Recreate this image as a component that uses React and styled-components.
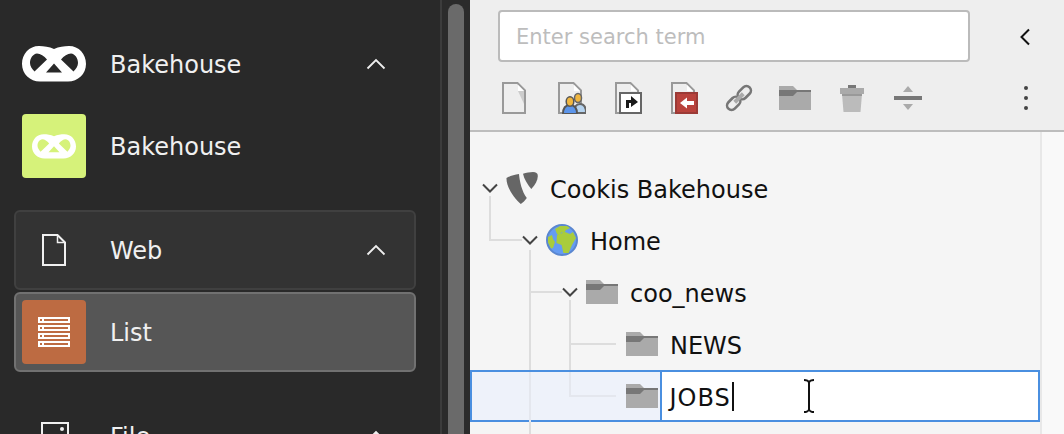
import React from "react"
import styled, { createGlobalStyle } from "styled-components"

const GlobalStyle = createGlobalStyle`
  html, body {
    margin: 0;
    padding: 0;
    height: 100%;
    overflow: hidden;
    font-family: "DejaVu Sans", Verdana, sans-serif;
  }
  #root { height: 100%; }
`

const Page = styled.div`
  display: flex;
  width: 1064px;
  height: 434px;
  overflow: hidden;
`

const Sidebar = styled.aside`
  width: 440px;
  flex: none;
  box-sizing: border-box;
  padding: 32px 24px 0 14px;
  background: #292929;
  overflow: hidden;
`

const SideScroll = styled.div`
  width: 30px;
  flex: none;
  box-sizing: border-box;
  padding: 4px 6px 0 6px;
  background: #2b2b2b;
  border-left: 2px solid #3c3c3c;
`

const SideThumb = styled.div`
  height: 500px;
  border-radius: 8px;
  background: #6a6a6a;
`

const ModuleRow = styled.div`
  display: flex;
  align-items: center;
  height: ${(p) => p.$height || 64}px;
  margin-bottom: ${(p) => p.$gap || 0}px;
  padding-left: 8px;
  padding-right: 30px;
  color: #f0f0f0;
  font-size: 24px;
`

const ModuleBox = styled(ModuleRow)`
  box-sizing: border-box;
  height: 80px;
  padding-left: 6px;
  padding-right: 28px;
  border: 2px solid ${(p) => (p.$active ? "#717171" : "#404040")};
  border-radius: 6px;
  background: ${(p) => (p.$active ? "#565656" : "#333333")};
`

const IconSlot = styled.div`
  width: 64px;
  height: 64px;
  flex: none;
  display: flex;
  align-items: center;
  justify-content: center;
  border-radius: 4px;
  background: ${(p) => p.$bg || "transparent"};
  margin-right: 24px;
`

const Label = styled.span`
  flex: 1;
  padding-top: 2px;
  line-height: 1;
`

const Panel = styled.main`
  flex: 1;
  display: flex;
  flex-direction: column;
  min-width: 0;
  background: #f5f5f5;
`

const Toolbar = styled.header`
  height: 132px;
  flex: none;
  box-sizing: border-box;
  padding: 10px 22px 0 28px;
  background: #eeeeee;
  border-bottom: 2px solid #bdbdbd;
`

const SearchRow = styled.div`
  display: flex;
  align-items: center;
  height: 52px;
  margin-bottom: 20px;
`

const SearchBox = styled.div`
  box-sizing: border-box;
  width: 472px;
  height: 52px;
  padding: 2px 0 0 16px;
  display: flex;
  align-items: center;
  background: #ffffff;
  border: 2px solid #bbbbbb;
  border-radius: 4px;
  color: #bdbdbd;
  font-size: 21px;
`

const CollapseIcon = styled.svg`
  margin: 2px 0 0 49px;
`

const ActionRow = styled.div`
  display: flex;
  align-items: center;
  height: 32px;
`

const ActionIcon = styled.svg`
  display: block;
  flex: none;
  margin-right: 24.3px;
`

const MoreIcon = styled.svg`
  display: block;
  margin-left: auto;
`

const Body = styled.div`
  flex: 1;
  display: flex;
  min-height: 0;
`

const Tree = styled.div`
  position: relative;
  width: 570px;
  flex: none;
  padding-top: 30px;
`

const TreeLines = styled.svg`
  position: absolute;
  left: 0;
  top: 0;
`

const TreeScroll = styled.div`
  flex: 1;
  background: #f9f9f9;
  border-left: 2px solid #e8e8e8;
`

const Node = styled.div`
  position: relative;
  display: flex;
  align-items: center;
  box-sizing: border-box;
  height: 52px;
  padding-left: ${(p) => 12 + p.$level * 40}px;
  font-size: 24px;
  color: #111111;
`

const EditNode = styled(Node)`
  padding-left: ${(p) => 10 + p.$level * 40}px;
  border: 2px solid #4a8fe0;
  background: #eef2fa;
`

const Toggle = styled.div`
  width: 16px;
  height: 16px;
  flex: none;
  margin-right: 8px;
  display: flex;
  align-items: center;
  justify-content: center;
`

const NodeIcon = styled.svg`
  display: block;
  flex: none;
  margin-right: 12px;
`

const EditIcon = styled(NodeIcon)`
  margin-right: 1.5px;
`

const NodeText = styled.span`
  padding-top: 4px;
`

const NodeInput = styled.div`
  position: relative;
  flex: 1;
  align-self: stretch;
  display: flex;
  align-items: center;
  padding-left: 8px;
  background: #ffffff;
  border-left: 2px solid #4a8fe0;
  font-size: 24px;
`

const InputText = styled.span`
  padding-top: 3px;
  letter-spacing: 1px;
`

const Caret = styled.span`
  display: inline-block;
  width: 2px;
  height: 29px;
  margin-left: 1px;
  background: #111111;
`

const IBeam = styled.svg`
  position: absolute;
  left: 141px;
  top: 7px;
`

const Pretzel = ({ width, height }) => (
  <svg width={width} height={height} viewBox="0 0 64 36">
    <path
      fill="#ffffff"
      fillRule="evenodd"
      d="M32 3C27 .8 22 0 17 0 7 0 0 8 0 18c0 10 8 17.500 18 17.500h28c10 0 18-7.500 18-17.500C64 8 57 0 47 0 42 0 37 .8 32 3ZM15 7.500C11 8 8 12 8 17c0 3 2 6 4.500 8.500L25 13.500C22 10 18.500 7.500 15 7.500ZM49 7.500C53 8 56 12 56 17c0 3-2 6-4.500 8.500L39 13.500C42 10 45.500 7.500 49 7.500ZM32 17.500 24 26.500H40Z"
    />
  </svg>
)

const Chevron = ({ up }) => (
  <svg width="20" height="12" viewBox="0 0 20 12">
    <path
      d={up ? "M1.500 10.500 10 2l8.500 8.500" : "M1.500 1.500 10 10l8.500-8.500"}
      fill="none"
      stroke="#eeeeee"
      strokeWidth="1.800"
    />
  </svg>
)

const TreeChevron = () => (
  <svg width="16" height="10" viewBox="0 0 16 10">
    <path d="M1 1.500 8 8.500l7-7" fill="none" stroke="#444444" strokeWidth="2" />
  </svg>
)

const PageGlyph = ({ stroke = "#999999" }) => (
  <path d="M5 1H19.500L27 8.500V31H5Z" fill="none" stroke={stroke} strokeWidth="2" />
)

const FolderGlyph = () => (
  <>
    <path d="M0 0H14L18 4H32V24H0Z" fill="#aaaaaa" />
    <path d="M0 4H32V6H18L14 10H0Z" fill="#777777" />
  </>
)

const Folder = ({ as: Wrap = NodeIcon }) => (
  <Wrap width="32" height="24" viewBox="0 0 32 24">
    <FolderGlyph />
  </Wrap>
)

const ListGlyph = () => (
  <svg width="32" height="30" viewBox="0 0 32 30">
    {[0, 8, 16, 24].map((y) => (
      <g key={y}>
        <rect x="0" y={y} width="32" height="6" fill="#ffffff" />
        <rect x="6" y={y + 2} width="24" height="2" fill="#bd6b42" />
        <rect x="2" y={y + 2} width="2" height="2" fill="#bd6b42" />
      </g>
    ))}
  </svg>
)

const Typo3 = () => (
  <NodeIcon width="32" height="33" viewBox="0 0 32 33">
    <path
      fill="#666666"
      d="M.5 6C4 4 8.500 2.500 13 2c.5 7 3 18 7.800 24-1.800 2.500-3.800 4.500-6 6C9 27.500 0 15 .5 6Z"
    />
    <path
      fill="#666666"
      d="M17 1.800C20 .8 24 0 27 0c3 0 4.800 1 4.800 4 0 4-2.500 9-6.500 13C21.500 12.500 18 7 17 1.800Z"
    />
  </NodeIcon>
)

const Globe = () => (
  <NodeIcon width="32" height="32" viewBox="0 0 32 32">
    <circle cx="16" cy="16" r="15" fill="#659cf2" stroke="#5a86cf" strokeWidth="2" />
    <path
      fill="#a9cc3c"
      d="M9 5l5-3 7 0 3 2-4 2-2 3-3-.5-1 2.500-3-1ZM11 11l8-3 5 2 3-2 3 6-4 7-3.400 8H17.400l-1.800-8-5.200-2ZM2 13l4-2 1 4 2 3-2 6-2 .5-3-6Z"
    />
  </NodeIcon>
)

const PlainPage = () => (
  <ActionIcon width="32" height="32" viewBox="0 0 32 32">
    <PageGlyph />
    <path d="M20 3V9H26Z" fill="#ffffff" />
    <path d="M20 9H26V22Z" fill="#cccccc" />
  </ActionIcon>
)

const UsersPage = () => (
  <ActionIcon width="32" height="32" viewBox="0 0 32 32">
    <PageGlyph />
    <path d="M20 3V9H26Z" fill="#ffffff" />
    <path d="M20 31c0-6 2-9 6-9s6 3 6 9Z" fill="#b5d3ef" stroke="#666666" strokeWidth="2" />
    <ellipse cx="24" cy="16" rx="3.500" ry="4.500" fill="#f0b63f" stroke="#666666" strokeWidth="1.500" />
    <path d="M9 32c0-6.500 2.500-9 7-9s7 2.500 7 9Z" fill="#5c95ea" stroke="#555555" strokeWidth="2" />
    <ellipse cx="16" cy="19.500" rx="3.800" ry="4.800" fill="#f0b63f" stroke="#555555" strokeWidth="1.500" />
  </ActionIcon>
)

const ShortcutPage = () => (
  <ActionIcon width="32" height="32" viewBox="0 0 32 32">
    <PageGlyph />
    <path d="M20 3V9H26Z" fill="#ffffff" />
    <rect x="9" y="11" width="21" height="20" fill="#ffffff" stroke="#666666" strokeWidth="2" />
    <path d="M15 26V18H20V14L27 20 20 25V21H18V26Z" fill="#1a1a1a" />
  </ActionIcon>
)

const UnlinkPage = () => (
  <ActionIcon width="32" height="32" viewBox="0 0 32 32">
    <PageGlyph />
    <path d="M20 3V9H26Z" fill="#ffffff" />
    <rect x="9" y="11" width="21" height="20" fill="#b9423c" stroke="#9b3a36" strokeWidth="2" />
    <path d="M13 21 20 15.500V19H27V23H20V26.500Z" fill="#ffffff" />
  </ActionIcon>
)

const LinkIcon = () => (
  <ActionIcon width="32" height="32" viewBox="0 0 32 32">
    <g transform="rotate(-45 16 16)" fill="none" strokeWidth="2.600">
      <rect x="1" y="11.500" width="15" height="9" rx="4.500" stroke="#777777" />
      <rect x="16" y="11.500" width="15" height="9" rx="4.500" stroke="#777777" />
      <path d="M10 16H22" stroke="#aaaaaa" strokeWidth="4" />
    </g>
  </ActionIcon>
)

const TrashIcon = () => (
  <ActionIcon width="32" height="32" viewBox="0 0 32 32">
    <rect x="12" y="3" width="8" height="3" fill="#777777" />
    <rect x="4" y="6" width="24" height="6" fill="#aaaaaa" />
    <path d="M6 12H26L24.500 30H7.500Z" fill="#bbbbbb" />
    <rect x="6" y="12" width="20" height="2" fill="#999999" />
  </ActionIcon>
)

const DividerIcon = () => (
  <ActionIcon width="32" height="32" viewBox="0 0 32 32">
    <path d="M16 4 21 10H11Z" fill="#aaaaaa" />
    <rect x="2" y="14" width="28" height="4" fill="#777777" />
    <path d="M16 28 21 22H11Z" fill="#aaaaaa" />
  </ActionIcon>
)

const App = () => (
  <Page>
    <GlobalStyle />
    <Sidebar>
      <ModuleRow $gap={18}>
        <IconSlot>
          <Pretzel width={64} height={36} />
        </IconSlot>
        <Label>Bakehouse</Label>
        <Chevron up />
      </ModuleRow>
      <ModuleRow $gap={32}>
        <IconSlot $bg="#d6f27a">
          <Pretzel width={44} height={25} />
        </IconSlot>
        <Label>Bakehouse</Label>
      </ModuleRow>
      <ModuleBox $gap={2}>
        <IconSlot>
          <svg width="32" height="32" viewBox="0 0 32 32">
            <PageGlyph stroke="#f0f0f0" />
            <path d="M19.500 2V8.500H26" fill="none" stroke="#f0f0f0" strokeWidth="1.500" />
          </svg>
        </IconSlot>
        <Label>Web</Label>
        <Chevron up />
      </ModuleBox>
      <ModuleBox $active $gap={24}>
        <IconSlot $bg="#bd6b42">
          <ListGlyph />
        </IconSlot>
        <Label>List</Label>
      </ModuleBox>
      <ModuleRow $height={80}>
        <IconSlot>
          <svg width="32" height="28" viewBox="0 0 32 28">
            <rect x="4" y="1" width="26" height="24" fill="none" stroke="#f0f0f0" strokeWidth="2" />
            <circle cx="24" cy="7" r="2" fill="#f0f0f0" />
          </svg>
        </IconSlot>
        <Label>File</Label>
        <Chevron up />
      </ModuleRow>
    </Sidebar>
    <SideScroll>
      <SideThumb />
    </SideScroll>
    <Panel>
      <Toolbar>
        <SearchRow>
          <SearchBox>Enter search term</SearchBox>
          <CollapseIcon width="12" height="18" viewBox="0 0 12 18">
            <path d="M10 1.500 2.500 9l7.500 7.500" fill="none" stroke="#111111" strokeWidth="2" />
          </CollapseIcon>
        </SearchRow>
        <ActionRow>
          <PlainPage />
          <UsersPage />
          <ShortcutPage />
          <UnlinkPage />
          <LinkIcon />
          <Folder as={ActionIcon} />
          <TrashIcon />
          <DividerIcon />
          <MoreIcon width="32" height="32" viewBox="0 0 32 32">
            <circle cx="16" cy="6" r="2" fill="#444444" />
            <circle cx="16" cy="16" r="2" fill="#444444" />
            <circle cx="16" cy="26" r="2" fill="#444444" />
          </MoreIcon>
        </ActionRow>
      </Toolbar>
      <Body>
        <Tree>
          <Node $level={0}>
            <Toggle>
              <TreeChevron />
            </Toggle>
            <Typo3 />
            <NodeText>Cookis Bakehouse</NodeText>
          </Node>
          <Node $level={1}>
            <Toggle>
              <TreeChevron />
            </Toggle>
            <Globe />
            <NodeText>Home</NodeText>
          </Node>
          <Node $level={2}>
            <Toggle>
              <TreeChevron />
            </Toggle>
            <Folder />
            <NodeText>coo_news</NodeText>
          </Node>
          <Node $level={3}>
            <Toggle />
            <Folder />
            <NodeText>NEWS</NodeText>
          </Node>
          <EditNode $level={3}>
            <Toggle />
            <Folder as={EditIcon} />
            <NodeInput>
              <InputText>JOBS</InputText>
              <Caret />
              <IBeam width="12" height="34" viewBox="0 0 12 34">
                <path
                  d="M1 1C3 1 6 2 6 4V30C6 32 3 33 1 33M11 1C9 1 6 2 6 4M6 30C6 32 9 33 11 33"
                  fill="none"
                  stroke="#111111"
                  strokeWidth="2"
                />
              </IBeam>
            </NodeInput>
          </EditNode>
          <TreeLines width="570" height="302" viewBox="0 0 570 302">
            <path
              d="M20 64V108H52M60 118V238M60 290V302M60 160H92M100 168V238M100 212H146"
              fill="none"
              stroke="#dddddd"
              strokeWidth="2"
            />
            <path d="M60 240V290M100 240V264H146" fill="none" stroke="#e4e7ee" strokeWidth="2" />
          </TreeLines>
        </Tree>
        <TreeScroll />
      </Body>
    </Panel>
  </Page>
)

export default App
